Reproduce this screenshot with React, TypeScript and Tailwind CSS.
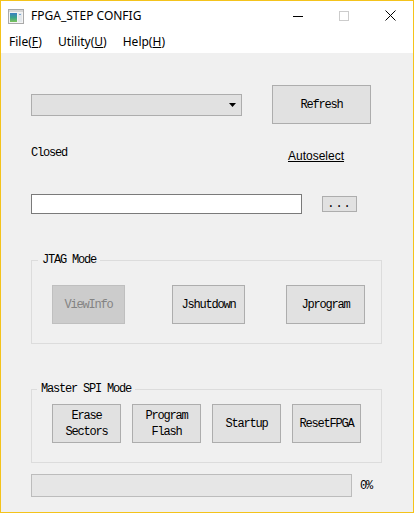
import React from "react";

const mono = "font-['Liberation_Mono',monospace] text-[12px] tracking-[-1.2px] leading-[16px]";

function Btn({
  label,
  w,
  h = "h-[39px]",
  disabled = false,
  className = "",
}: {
  label: React.ReactNode;
  w: string;
  h?: string;
  disabled?: boolean;
  className?: string;
}) {
  return (
    <div
      className={`${w} ${h} ${className} flex shrink-0 items-center justify-center border text-center ${mono} ${
        disabled
          ? "border-[#bfbfbf] bg-[#cccccc] text-[#838383]"
          : "border-[#adadad] bg-[#e1e1e1] text-black"
      }`}
    >
      {label}
    </div>
  );
}

function GroupBox({
  title,
  labelLeft,
  className,
  children,
}: {
  title: string;
  labelLeft: string;
  className: string;
  children: React.ReactNode;
}) {
  return (
    <div className={`relative ml-[30px] w-[351px] border border-[#dcdcdc] ${className}`}>
      {/* caption sits over the top border */}
      <span className={`absolute top-[-9px] ${labelLeft} bg-[#f0f0f0] px-[4px] ${mono}`}>{title}</span>
      {children}
    </div>
  );
}

function AppIcon() {
  return (
    <svg width="16" height="15" viewBox="0 0 16 15">
      <rect x="0.5" y="0.5" width="15" height="14" fill="#f4f4f4" stroke="#a9a9a9" />
      <rect x="1" y="1" width="14" height="2" fill="#d6d6d6" />
      <defs>
        <linearGradient id="g" x1="0" y1="0" x2="0" y2="1">
          <stop offset="0" stopColor="#3a7fc4" />
          <stop offset="0.5" stopColor="#3aa38a" />
          <stop offset="1" stopColor="#7cc25a" />
        </linearGradient>
      </defs>
      <rect x="2" y="4" width="7" height="9" fill="url(#g)" />
      <rect x="10" y="4" width="4" height="9" fill="#e4e8ec" />
      <rect x="11" y="5" width="2" height="1" fill="#7aa7d0" />
    </svg>
  );
}

export default function App() {
  return (
    <div className="flex h-[513px] w-[414px] flex-col overflow-hidden border border-[#f4c31b] bg-[#f0f0f0] text-black">
      {/* Title bar */}
      <div className="flex h-[29px] shrink-0 items-center bg-white">
        <div className="ml-[7px] mt-[1px]">
          <AppIcon />
        </div>
        <span className="ml-[7px] font-['Noto_Sans',sans-serif] text-[12px] leading-none">FPGA_STEP CONFIG</span>
        <div className="ml-auto flex h-full">
          <div className="flex h-full w-[46px] items-center justify-center">
            <div className="mt-[1px] h-[1px] w-[10px] bg-black" />
          </div>
          <div className="flex h-full w-[46px] items-center justify-center">
            <div className="h-[10px] w-[10px] border border-[#cccccc]" />
          </div>
          <div className="flex h-full w-[46px] items-center justify-center">
            <svg width="11" height="11" viewBox="0 0 11 11">
              <path d="M0.5 0.5 L10.5 10.5 M10.5 0.5 L0.5 10.5" stroke="#000" strokeWidth="1" />
            </svg>
          </div>
        </div>
      </div>

      {/* Menu bar */}
      <div className="flex h-[23px] shrink-0 items-center gap-[16px] bg-white pl-[8px] font-['Noto_Sans',sans-serif] text-[12px] leading-none">
        <span>
          File(<span className="underline">F</span>)
        </span>
        <span>
          Utility(<span className="underline">U</span>)
        </span>
        <span>
          Help(<span className="underline">H</span>)
        </span>
      </div>

      {/* Client area */}
      <div className="flex flex-col">
        <div className="mt-[32px] flex h-[39px] items-center pl-[30px]">
          <div className="flex h-[22px] w-[211px] items-center justify-end border border-[#adadad] bg-[#e1e1e1] pr-[5px]">
            <svg width="7" height="4" viewBox="0 0 7 4">
              <path d="M0 0 H7 L3.5 4 Z" fill="#000" />
            </svg>
          </div>
          <Btn label="Refresh" w="w-[99px]" className="ml-[30px]" />
        </div>

        <div className="mt-[21px] flex items-start pl-[30px]">
          <span className={`w-[257px] ${mono}`}>Closed</span>
          <span className="mt-[3px] font-['Liberation_Sans',sans-serif] text-[12px] leading-[16px] underline">
            Autoselect
          </span>
        </div>

        <div className="mt-[30px] flex items-center pl-[30px]">
          <div className="h-[20px] w-[271px] border border-[#7a7a7a] bg-white" />
          <Btn label="..." w="w-[35px]" h="h-[16px]" className="ml-[20px] tracking-[1px]" />
        </div>

        <GroupBox title="JTAG Mode" labelLeft="left-[6px]" className="mt-[46px] h-[84px]">
          <div className="flex pl-[20px] pt-[24px]">
            <Btn label="ViewInfo" w="w-[73px]" disabled />
            <Btn label="Jshutdown" w="w-[73px]" className="ml-[47px]" />
            <Btn label="Jprogram" w="w-[79px]" className="ml-[41px]" />
          </div>
        </GroupBox>

        <GroupBox title="Master SPI Mode" labelLeft="left-[5px]" className="mt-[45px] h-[74px]">
          <div className="flex gap-[11px] pl-[20px] pt-[14px]">
            <Btn
              label={
                <span>
                  Erase
                  <br />
                  Sectors
                </span>
              }
              w="w-[69px]"
            />
            <Btn
              label={
                <span>
                  Program
                  <br />
                  Flash
                </span>
              }
              w="w-[69px]"
            />
            <Btn label="Startup" w="w-[69px]" />
            <Btn label="ResetFPGA" w="w-[69px]" />
          </div>
        </GroupBox>

        <div className="mt-[11px] flex items-center pl-[30px]">
          <div className="h-[23px] w-[321px] border border-[#bcbcbc] bg-[#e6e6e6]" />
          <span className={`ml-[8px] ${mono}`}>0%</span>
        </div>
      </div>
    </div>
  );
}
